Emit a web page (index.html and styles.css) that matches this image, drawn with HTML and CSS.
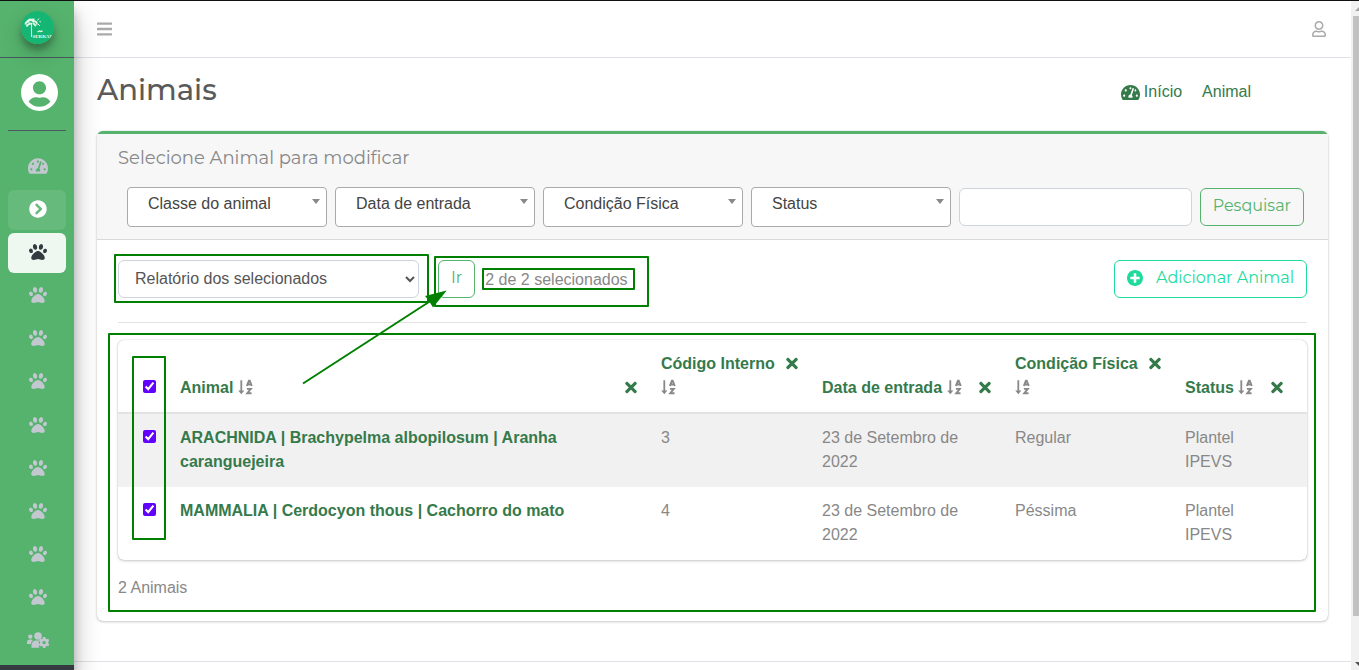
FILE: index.html
```html
<!DOCTYPE html>
<html lang="pt-br">
<head>
<meta charset="utf-8">
<meta name="viewport" content="width=device-width, initial-scale=1">
<title>Animais</title>
<link rel="stylesheet" href="styles.css">
</head>
<body>
<svg class="sprite" aria-hidden="true">
  <symbol id="paw" viewBox="0 0 512 512"><path d="M256 224c-79.41 0-192 122.76-192 200.25 0 34.9 26.81 55.75 71.74 55.75 48.84 0 81.09-25.08 120.26-25.08 39.51 0 71.85 25.08 120.26 25.08 44.93 0 71.74-20.85 71.74-55.75C448 346.76 335.41 224 256 224zm-147.28-12.61c-10.4-34.65-42.44-57.09-71.56-50.13-29.12 6.96-44.29 40.69-33.89 75.34 10.4 34.65 42.44 57.09 71.56 50.13 29.12-6.96 44.29-40.69 33.89-75.34zm84.72-20.78c30.94-8.14 46.42-49.94 34.58-93.36s-46.52-72.01-77.46-63.87-46.42 49.94-34.58 93.36 46.52 72.01 77.46 63.87zm281.39-29.34c-29.12-6.96-61.15 15.48-71.56 50.13-10.4 34.65 4.77 68.38 33.89 75.34 29.12 6.96 61.15-15.48 71.56-50.13 10.4-34.65-4.77-68.38-33.89-75.34zm-156.27 29.34c30.94 8.14 65.62-20.45 77.46-63.87 11.84-43.42-3.64-85.21-34.58-93.36s-65.62 20.45-77.46 63.87c-11.84 43.42 3.64 85.22 34.58 93.36z"/></symbol>
  <symbol id="times" viewBox="0 0 352 512"><path d="M242.72 256l100.07-100.07c12.28-12.28 12.28-32.19 0-44.48l-22.24-22.24c-12.28-12.28-32.19-12.28-44.48 0L176 189.28 75.93 89.21c-12.28-12.28-32.19-12.28-44.48 0L9.21 111.45c-12.28 12.28-12.28 32.19 0 44.48L109.28 256 9.21 356.07c-12.28 12.28-12.28 32.19 0 44.48l22.24 22.24c12.28 12.28 32.2 12.28 44.48 0L176 322.72l100.07 100.07c12.28 12.28 32.2 12.28 44.48 0l22.24-22.24c12.28-12.28 12.28-32.19 0-44.48L242.72 256z"/></symbol>
  <symbol id="gauge" viewBox="0 0 576 512"><path d="M288 32C128.94 32 0 160.94 0 320c0 52.8 14.25 102.26 39.06 144.8 5.61 9.62 16.3 15.2 27.44 15.2h443c11.14 0 21.83-5.58 27.44-15.2C561.75 422.26 576 372.8 576 320c0-159.06-128.94-288-288-288zm0 64c14.71 0 26.58 10.13 30.32 23.65-1.11 2.26-2.64 4.23-3.45 6.67l-9.22 27.67c-5.13 3.49-10.97 6.01-17.64 6.01-17.67 0-32-14.33-32-32S270.33 96 288 96zM96 384c-17.67 0-32-14.33-32-32s14.33-32 32-32 32 14.33 32 32-14.33 32-32 32zm48-160c-17.67 0-32-14.33-32-32s14.33-32 32-32 32 14.33 32 32-14.33 32-32 32zm246.77-72.41l-61.33 184C343.13 347.33 352 364.54 352 384c0 11.72-3.38 22.55-8.88 32H232.88c-5.5-9.45-8.88-20.28-8.88-32 0-33.94 26.5-61.43 59.9-63.59l61.34-184.01c4.17-12.56 17.73-19.45 30.36-15.17 12.57 4.19 19.35 17.79 15.17 30.36zm14.66 57.2l15.52-46.55c3.47-1.29 7.13-2.23 11.05-2.23 17.67 0 32 14.33 32 32s-14.33 32-32 32c-11.38-.01-20.89-6.28-26.57-15.22zM480 384c-17.67 0-32-14.33-32-32s14.33-32 32-32 32 14.33 32 32-14.33 32-32 32z"/></symbol>
  <symbol id="sort" viewBox="0 0 16 16"><path d="M2.400 1.200h1.800v10.300h2.200L3.300 15.200.2 11.500h2.200z"/><path d="M8.800 7l2.100-5.200h.8L13.800 7M9.800 5.500h3M8.900 9.900h3.900l-3.500 4.300h4.200" fill="none" stroke="currentColor" stroke-width="1.900"/></symbol>
</svg>

<div class="page">
  <aside class="sidebar">
    <a class="brand" href="#" aria-label="SERRAT">
      <svg class="logo" viewBox="0 0 33 33" aria-hidden="true">
        <circle cx="16.500" cy="16.500" r="16.500" fill="#15b573"/>
        <g stroke="#dff5e8" fill="none">
          <path d="M10.500 12v14" stroke-width="1.100"/>
          <path d="M4.500 13.500c0-2 2-3 4-3M6 10.500c2-2 5-2 9 .5M11 10.500c3-1 5 0 5 3M5.500 15.500c1-2 3-3 5-3M12 12l3 3M7.500 8.800l6-.3" stroke-width="1.900"/>
          <path d="M16.500 9.500l1.500-2M18.500 10.500l1.500.5M17 13l2 2" stroke-width="1"/>
          <path d="M16.500 21l2-1 1 .5 2-.5" stroke-width="1.300"/>
        </g>
        <text x="11.500" y="27" fill="#e9fbf2" font-family="Liberation Serif, serif" font-weight="bold" font-size="5">SERRAT</text>
      </svg>
    </a>
    <div class="account">
      <svg class="avatar" viewBox="0 8 496 496" aria-hidden="true"><path d="M248 8C111 8 0 119 0 256s111 248 248 248 248-111 248-248S385 8 248 8zm0 96c48.600 0 88 39.400 88 88s-39.400 88-88 88-88-39.400-88-88 39.400-88 88-88zm0 344c-58.700 0-111.300-26.600-146.500-68.200 18.800-35.400 55.600-59.800 98.500-59.800 2.400 0 4.800.4 7.100 1.100 13 4.200 26.600 6.900 40.900 6.900 14.300 0 28-2.700 40.900-6.900 2.300-.7 4.700-1.100 7.100-1.100 42.900 0 79.700 24.400 98.500 59.800C359.300 421.400 306.700 448 248 448z"/></svg>
    </div>
    <nav class="menu" aria-label="Menu">
      <a href="#" aria-label="Início"><svg class="ico-wide"><use href="#gauge"/></svg></a>
      <a class="open" href="#" aria-label="Expandir"><svg class="ico" viewBox="0 0 512 512"><path d="M256 8c137 0 248 111 248 248S393 504 256 504 8 393 8 256 119 8 256 8zm113.900 231L234.400 103.500c-9.400-9.400-24.600-9.400-33.900 0l-17 17c-9.400 9.400-9.400 24.600 0 33.900L285.100 256 183.500 357.600c-9.400 9.400-9.400 24.600 0 33.900l17 17c9.400 9.400 24.600 9.400 33.900 0L369.900 273c9.400-9.400 9.400-24.600 0-34z"/></svg></a>
      <a class="active" href="#" aria-label="Animais"><svg class="ico"><use href="#paw"/></svg></a>
      <a href="#" aria-label="Item 4"><svg class="ico"><use href="#paw"/></svg></a>
      <a href="#" aria-label="Item 5"><svg class="ico"><use href="#paw"/></svg></a>
      <a href="#" aria-label="Item 6"><svg class="ico"><use href="#paw"/></svg></a>
      <a href="#" aria-label="Item 7"><svg class="ico"><use href="#paw"/></svg></a>
      <a href="#" aria-label="Item 8"><svg class="ico"><use href="#paw"/></svg></a>
      <a href="#" aria-label="Item 9"><svg class="ico"><use href="#paw"/></svg></a>
      <a href="#" aria-label="Item 10"><svg class="ico"><use href="#paw"/></svg></a>
      <a href="#" aria-label="Item 11"><svg class="ico"><use href="#paw"/></svg></a>
      <a href="#" aria-label="Usuários"><svg class="ico-users" viewBox="0 0 22 16">
        <circle cx="3.300" cy="4.600" r="2.200"/><circle cx="11" cy="4" r="3.800"/>
        <path d="M0 12v-1.700c0-1.700 1.200-2.800 2.800-2.800h1.600c.8 0 1.300.2 1.800.6C4.800 9 4.200 10.200 4 12zM4.500 15.800v-2.600c0-2.800 2-4.700 4.500-4.700h3l.3.300-.9 1.500 1.100 1.100v2.100l-1 .6 1 1.700z"/>
        <path fill-rule="evenodd" d="M16 5h2.300l.4 1.600 1.100.6 1.500-.4 1 1.900-1.100 1.200v1.300l1.100 1.200-1 1.900-1.500-.4-1.100.6-.4 1.500H16l-.4-1.500-1.100-.6-1.500.4-1-1.900 1.100-1.200V9.900L12 8.700l1-1.900 1.500.4 1.100-.6zm1.100 3.900a1.700 1.700 0 1 0 0 3.400 1.700 1.700 0 0 0 0-3.400z"/>
      </svg></a>
    </nav>
    <div class="sidebar-end"></div>
  </aside>

  <div class="main">
    <header class="topbar">
      <button class="plain" type="button" aria-label="Menu"><svg class="bars" viewBox="0 0 448 512"><path d="M16 132h416c8.800 0 16-7.200 16-16V76c0-8.800-7.200-16-16-16H16C7.200 60 0 67.200 0 76v40c0 8.800 7.200 16 16 16zM16 292h416c8.800 0 16-7.200 16-16v-40c0-8.800-7.200-16-16-16H16c-8.800 0-16 7.200-16 16v40c0 8.800 7.200 16 16 16zM16 452h416c8.800 0 16-7.200 16-16v-40c0-8.800-7.200-16-16-16H16c-8.800 0-16 7.200-16 16v40c0 8.800 7.200 16 16 16z"/></svg></button>
      <button class="plain" type="button" aria-label="Conta"><svg class="person" viewBox="0 0 448 512"><path d="M313.600 304c-28.700 0-42.500 16-89.600 16-47.100 0-60.800-16-89.600-16C60.200 304 0 364.200 0 438.400V464c0 26.500 21.500 48 48 48h352c26.500 0 48-21.500 48-48v-25.600c0-74.200-60.200-134.400-134.400-134.400zM400 464H48v-25.600c0-47.600 38.800-86.400 86.400-86.400 14.600 0 38.300 16 89.600 16 51.700 0 74.900-16 89.600-16 47.600 0 86.400 38.800 86.400 86.400V464zM224 288c79.500 0 144-64.500 144-144S303.500 0 224 0 80 64.500 80 144s64.500 144 144 144zm0-240c52.900 0 96 43.100 96 96s-43.100 96-96 96-96-43.100-96-96 43.100-96 96-96z"/></svg></button>
    </header>

    <main class="content">
      <div class="heading">
        <h1>Animais</h1>
        <nav class="crumbs" aria-label="Trilha">
          <a href="#"><svg class="crumb-ico"><use href="#gauge"/></svg>Início</a>
          <a href="#">Animal</a>
        </nav>
      </div>

      <section class="card">
        <div class="card-head">
          <h2>Selecione Animal para modificar</h2>
          <form class="filters">
            <div class="pick"><select aria-label="Classe do animal"><option>Classe do animal</option></select></div>
            <div class="pick"><select aria-label="Data de entrada"><option>Data de entrada</option></select></div>
            <div class="pick"><select aria-label="Condição Física"><option>Condição Física</option></select></div>
            <div class="pick"><select aria-label="Status"><option>Status</option></select></div>
            <input class="search" type="text" aria-label="Pesquisar">
            <button class="btn" type="button">Pesquisar</button>
          </form>
        </div>

        <div class="card-body">
          <div class="tools">
            <select class="action" aria-label="Ação"><option>Relatório dos selecionados</option></select>
            <button class="btn go" type="button">Ir</button>
            <span class="count">2 de 2 selecionados</span>
            <button class="btn add" type="button"><svg class="plus" viewBox="8 8 496 496"><path d="M256 8C119 8 8 119 8 256s111 248 248 248 248-111 248-248S393 8 256 8zm144 276c0 6.600-5.400 12-12 12h-92v92c0 6.600-5.400 12-12 12h-56c-6.600 0-12-5.400-12-12v-92h-92c-6.600 0-12-5.400-12-12v-56c0-6.600 5.400-12 12-12h92v-92c0-6.600 5.400-12 12-12h56c6.600 0 12 5.400 12 12v92h92c6.600 0 12 5.400 12 12v56z"/></svg>Adicionar Animal</button>
          </div>

          <div class="table-box">
            <table>
              <colgroup><col class="c-check"><col><col class="c-code"><col class="c-date"><col class="c-cond"><col class="c-status"></colgroup>
              <thead>
                <tr>
                  <th><input type="checkbox" checked aria-label="Selecionar todos"></th>
                  <th><a class="drop" href="#" aria-label="Remover"><svg class="x"><use href="#times"/></svg></a><a href="#">Animal</a> <svg class="sort"><use href="#sort"/></svg></th>
                  <th><a class="drop" href="#" aria-label="Remover"><svg class="x"><use href="#times"/></svg></a><a href="#">Código Interno</a> <svg class="sort"><use href="#sort"/></svg></th>
                  <th><a class="drop" href="#" aria-label="Remover"><svg class="x"><use href="#times"/></svg></a><a href="#">Data de entrada</a> <svg class="sort"><use href="#sort"/></svg></th>
                  <th><a class="drop" href="#" aria-label="Remover"><svg class="x"><use href="#times"/></svg></a><a href="#">Condição Física</a> <svg class="sort"><use href="#sort"/></svg></th>
                  <th><a class="drop" href="#" aria-label="Remover"><svg class="x"><use href="#times"/></svg></a><a href="#">Status</a> <svg class="sort"><use href="#sort"/></svg></th>
                </tr>
              </thead>
              <tbody>
                <tr>
                  <td><input type="checkbox" checked aria-label="Selecionar Aranha caranguejeira"></td>
                  <td><a href="#">ARACHNIDA | Brachypelma albopilosum | Aranha caranguejeira</a></td>
                  <td>3</td><td>23 de Setembro de 2022</td><td>Regular</td><td>Plantel IPEVS</td>
                </tr>
                <tr>
                  <td><input type="checkbox" checked aria-label="Selecionar Cachorro do mato"></td>
                  <td><a href="#">MAMMALIA | Cerdocyon thous | Cachorro do mato</a></td>
                  <td>4</td><td>23 de Setembro de 2022</td><td>Péssima</td><td>Plantel IPEVS</td>
                </tr>
              </tbody>
            </table>
          </div>
          <p class="total">2 Animais</p>
        </div>
      </section>
    </main>
    <footer class="footer"></footer>
  </div>

  <div class="scroll" aria-hidden="true">
    <i class="up"></i><i class="thumb"></i><i class="down"></i>
  </div>

  <svg class="marks" width="1359" height="670" aria-hidden="true">
    <g fill="none" stroke="#008000" stroke-width="2" stroke-linejoin="round">
      <rect x="115" y="255" width="313" height="47"/>
      <rect x="435" y="257" width="213" height="49"/>
      <rect x="483" y="269" width="151" height="20"/>
      <rect x="133" y="357" width="32" height="182"/>
      <rect x="109" y="334" width="1206" height="277"/>
      <path d="M303 383.500L432 300"/>
    </g>
    <path fill="#008000" d="M446.700 290.500L425 296l4 5 4 6.500z"/>
  </svg>
</div>
</body>
</html>
```
FILE: styles.css
```css
* { box-sizing: border-box; }

body {
  margin: 0;
  background: #fff;
  color: #888;
  font: 16px/24px "Liberation Sans", Arial, sans-serif;
}

h1, h2, p { margin: 0; }
a { color: #357a4b; text-decoration: none; }
svg { fill: currentColor; }
button, input, select { font: inherit; }
.sprite { position: absolute; width: 0; height: 0; }

.page {
  position: relative;
  display: flex;
  min-height: 100vh;
  border-top: 1px solid #111;
  overflow: hidden;
}

/* Sidebar */
.sidebar {
  position: relative;
  z-index: 2;
  display: flex;
  flex-direction: column;
  flex: 0 0 74px;
  background: #55b36d;
  box-shadow: 0 14px 28px rgba(0, 0, 0, .25), 0 10px 10px rgba(0, 0, 0, .22);
}
.brand {
  display: flex;
  justify-content: center;
  height: 57px;
  padding-top: 10px;
  border-bottom: 1px solid #4b545c;
}
.logo {
  width: 33px;
  height: 33px;
  border-radius: 50%;
  box-shadow: 0 10px 20px rgba(0, 0, 0, .19), 0 6px 6px rgba(0, 0, 0, .23);
}
.account {
  display: flex;
  justify-content: center;
  margin: 0 8px;
  padding: 16px 0 19px 5px;
  border-bottom: 1px solid #4f5962;
  color: #fff;
}
.avatar { width: 37px; height: 37px; }
.menu {
  display: flex;
  flex: 1;
  flex-direction: column;
  justify-content: space-between;
  padding: 16px 8px 3px;
}
.menu a {
  display: flex;
  align-items: center;
  justify-content: center;
  height: 40px;
  padding: 0 0 3px 1px;
  border-radius: 6px;
  color: #c2c7d0;
}
.menu .open { background: rgba(255, 255, 255, .1); color: #fff; }
.menu .active { background: rgba(255, 255, 255, .9); color: #343a40; }
.ico { width: 18px; height: 18px; }
.ico-wide { width: 20px; height: 18px; }
.ico-users { width: 22px; height: 16px; }
.sidebar-end { height: 5px; background: #343a40; }

/* Main column */
.main {
  display: flex;
  flex: 1;
  flex-direction: column;
  min-width: 0;
}
.topbar {
  display: flex;
  align-items: center;
  justify-content: space-between;
  height: 57px;
  padding: 0 25px 0 23px;
  border-bottom: 1px solid #dee2e6;
}
.plain {
  display: flex;
  padding: 0;
  border: 0;
  background: none;
  color: #aaa;
}
.bars { width: 15px; height: 18px; }
.person { width: 14px; height: 16px; }
.content { flex: 1; padding: 14px 23px 0; }
.heading {
  display: flex;
  align-items: center;
  justify-content: space-between;
  padding-right: 77px;
}
h1 {
  color: #5a5a5a;
  font: 500 29px/36px Montserrat, Inter, sans-serif;
}
.crumbs { display: flex; gap: 20px; padding-top: 4px; }
.crumbs a { display: flex; align-items: center; gap: 4px; }
.crumb-ico { width: 19px; height: 17px; }

/* Card */
.card {
  margin-top: 23px;
  border-top: 3px solid #55b36d;
  border-radius: 6px;
  background: #fff;
  box-shadow: 0 0 1px rgba(0, 0, 0, .25), 0 1px 3px rgba(0, 0, 0, .2);
}
.card-head {
  padding: 12px 24px 12px 21px;
  border-bottom: 1px solid #d9d9d9;
  background: #f7f7f7;
}
h2 {
  font: 400 18px/24px Montserrat, Inter, sans-serif;
}
.filters {
  display: flex;
  align-items: center;
  gap: 8px;
  margin: 17px 0 0 9px;
}
.pick { position: relative; flex: 0 0 200px; }
.pick select {
  display: block;
  width: 100%;
  height: 40px;
  padding: 0 20px 6px;
  border: 1px solid #aaa;
  border-radius: 4px;
  appearance: none;
  background: #fff;
  color: #444;
}
.pick::after {
  position: absolute;
  top: 12px;
  right: 7px;
  border: 4px solid transparent;
  border-top: 5px solid #888;
  border-bottom: 0;
  content: "";
}
.search {
  flex: 1;
  min-width: 0;
  height: 38px;
  border: 1px solid #ced4da;
  border-radius: 6px;
}
.btn {
  height: 38px;
  padding: 0 12px 2px;
  border: 1px solid #55b36d;
  border-radius: 6px;
  background: transparent;
  color: #55b36d;
  font: 400 16px/24px Montserrat, Inter, sans-serif;
}

.card-body { padding: 20px 21px 21px; }
.tools {
  display: flex;
  align-items: center;
  padding-bottom: 24px;
  border-bottom: 1px solid #e3e3e3;
}
.action {
  width: 301px;
  height: 38px;
  padding: 0 0 2px 12px;
  border: 1px solid #ced4da;
  border-radius: 6px;
  background: #fff;
  color: #555;
}
.go { margin-left: 19px; }
.count { margin-left: 10px; padding-top: 2px; }
.add {
  display: flex;
  align-items: center;
  gap: 13px;
  margin-left: auto;
  border-color: #1ddb9b;
  color: #1ddb9b;
}
.plus { width: 16px; height: 16px; }

/* Table */
.table-box {
  margin-top: 17px;
  border-radius: 6px;
  box-shadow: 0 0 1px rgba(0, 0, 0, .3), 0 1px 3px rgba(0, 0, 0, .2);
  overflow: hidden;
}
table {
  width: 100%;
  border-spacing: 0;
  table-layout: fixed;
}
.c-check { width: 50px; }
.c-code { width: 161px; }
.c-date { width: 193px; }
.c-cond { width: 170px; }
.c-status { width: 134px; }
th, td {
  padding: 12px;
  text-align: left;
  vertical-align: top;
}
th { border-bottom: 2px solid #e3e3e3; vertical-align: bottom; }
td a { font-weight: bold; }
th:first-child, td:first-child { padding-right: 0; padding-left: 25px; }
th:last-child, td:last-child { padding-right: 24px; }
tbody tr:nth-child(odd) { background: #f1f1f1; }
tbody td { padding-bottom: 13px; }
input[type="checkbox"] {
  width: 13px;
  height: 13px;
  margin: 0;
  accent-color: #6200ff;
}
.drop { float: right; height: 24px; }
.x { width: 12px; height: 17px; margin-top: 3px; }
.sort { width: 16px; height: 16px; vertical-align: -2px; }
.total { margin-top: 16px; }

.footer { height: 9px; border-top: 1px solid #dee2e6; }

/* Scroll track */
.scroll {
  display: flex;
  flex: 0 0 8px;
  flex-direction: column;
  align-items: flex-end;
  background: #f1f1f1;
  overflow: hidden;
}
.thumb { width: 6px; height: 600px; margin: 5px 0 46px; background: #c1c1c1; }
.up, .down { width: 4px; height: 4px; background: #505050; }
.up { margin-top: 6px; background: #a3a3a3; clip-path: polygon(100% 0, 100% 100%, 0 100%); }
.down { clip-path: polygon(0 0, 100% 0, 100% 100%); }

/* Highlight overlay */
.marks {
  position: absolute;
  z-index: 3;
  top: -1px;
  left: 0;
  pointer-events: none;
}
```
